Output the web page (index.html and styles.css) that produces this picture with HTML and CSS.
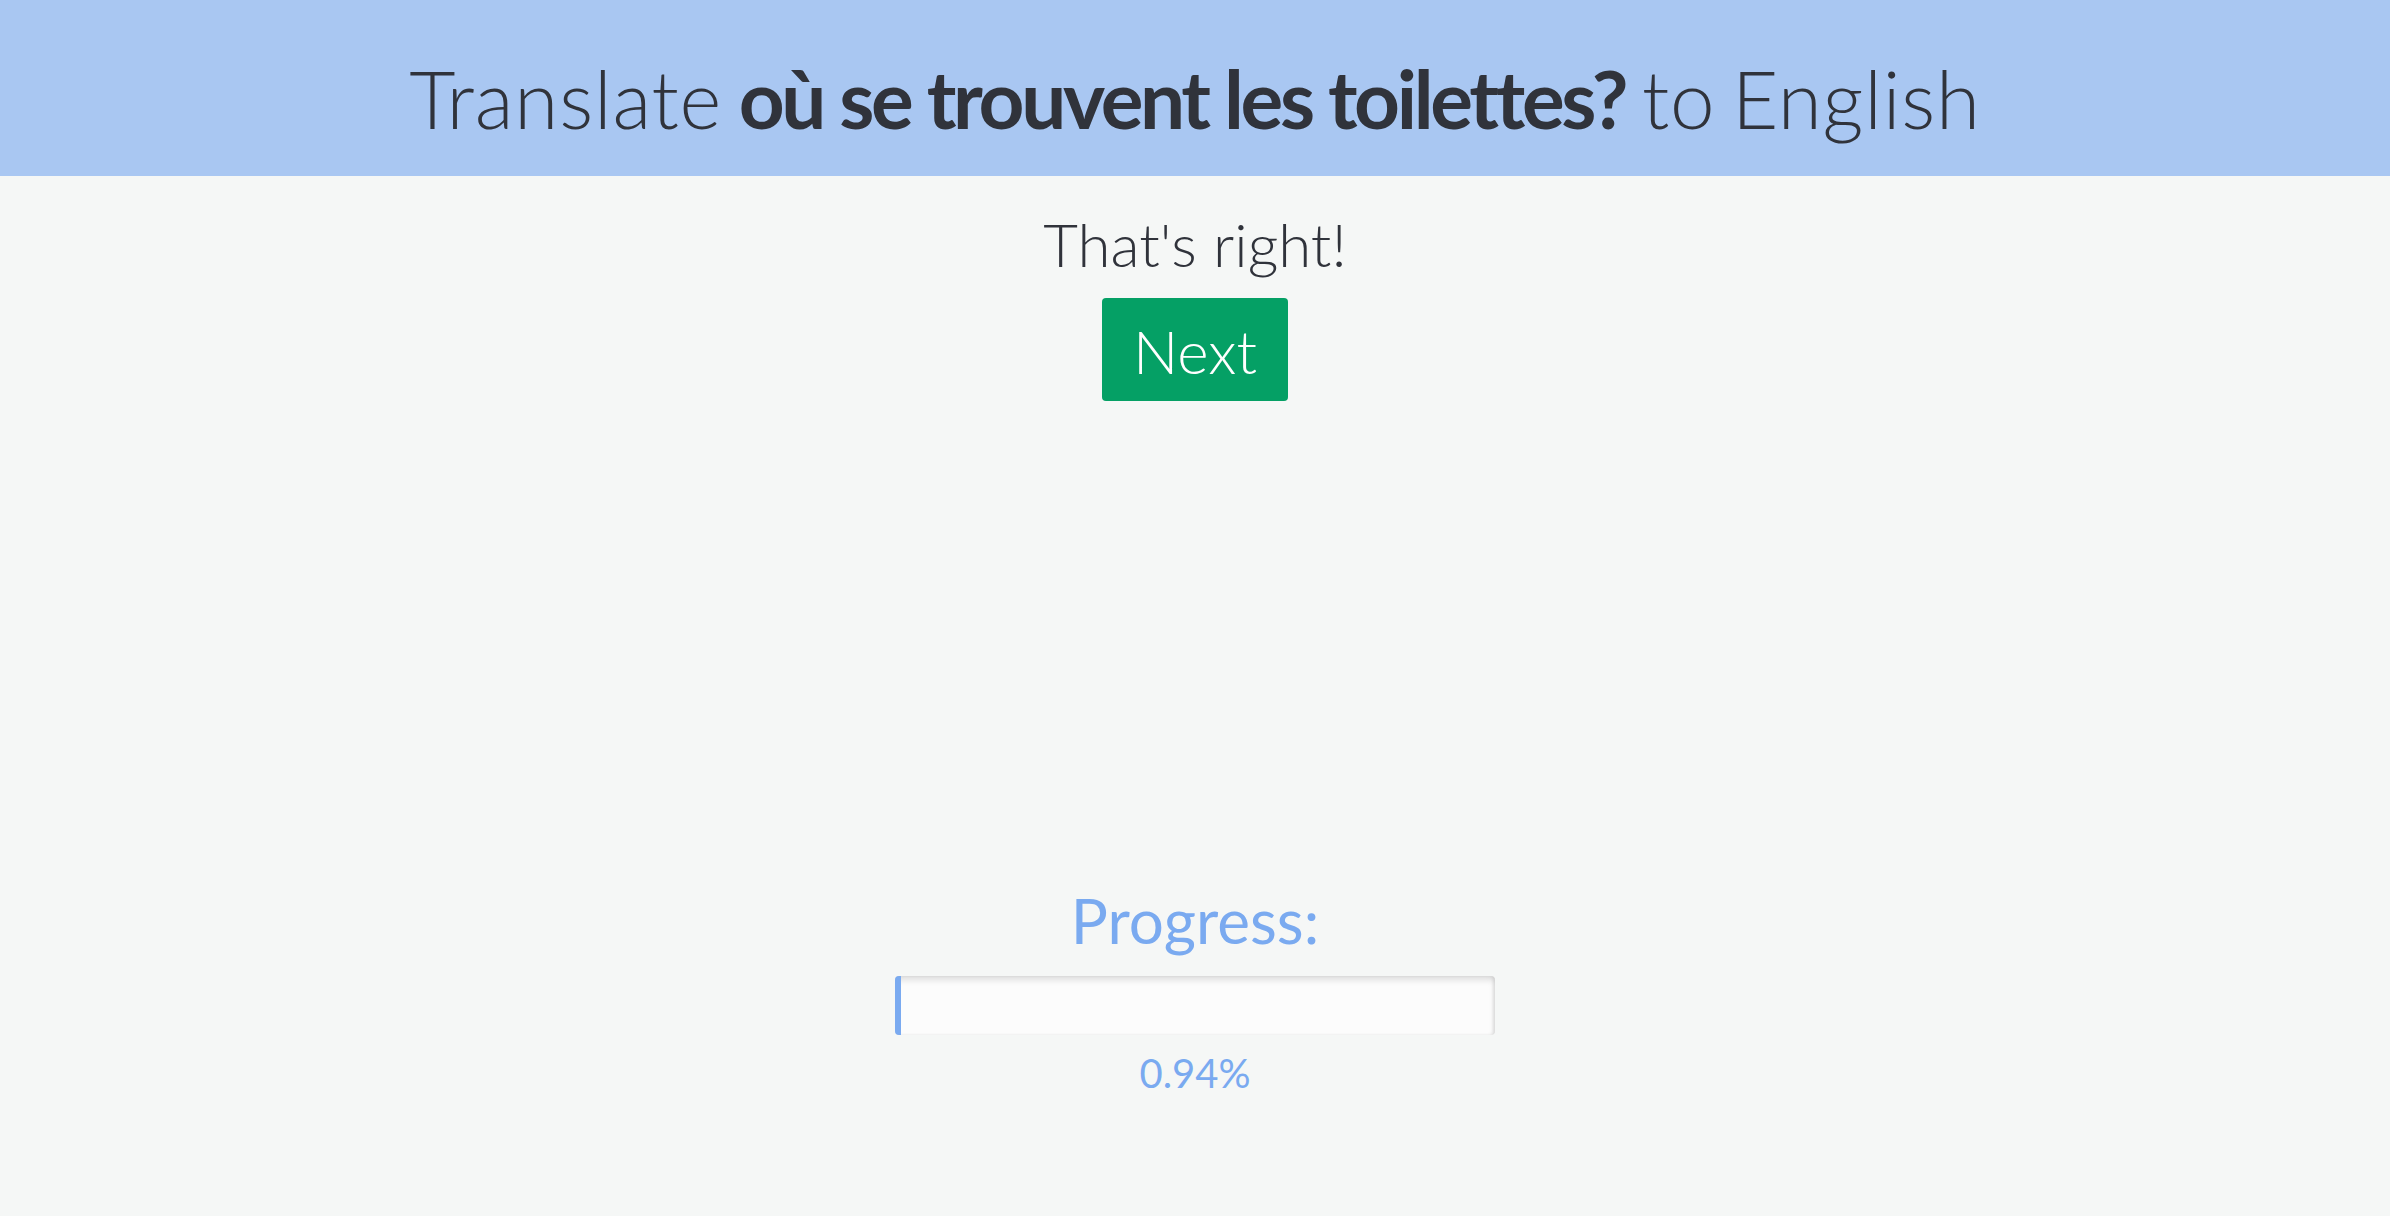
FILE: index.html
```html
<!DOCTYPE html>
<html lang="en">
<head>
<meta charset="utf-8">
<title>Translate</title>
<link rel="stylesheet" href="styles.css">
</head>
<body>
<header class="banner">
  <h1 class="prompt">Translate <strong>où se trouvent les toilettes?</strong> to English</h1>
</header>
<main class="content">
  <p class="feedback">That's right!</p>
  <button class="next-btn" type="button">Next</button>
</main>
<section class="progress-area">
  <h2 class="progress-label">Progress:</h2>
  <div class="progress-track">
    <div class="progress-fill" style="width: 0.94%"></div>
  </div>
  <div class="progress-value">0.94%</div>
</section>
</body>
</html>
```

FILE: styles.css
```css
html, body {
  margin: 0;
  padding: 0;
}
body {
  background: #f5f7f6;
  font-family: Lato, "Open Sans", sans-serif;
  font-variant-ligatures: none;
  color: #30333b;
  height: 1216px;
  overflow: hidden;
}
.banner {
  background: #a9c7f2;
  height: 176px;
  box-sizing: border-box;
  padding-top: 48px;
  text-align: center;
}
.prompt {
  margin: 0;
  font-size: 80px;
  line-height: 100px;
  font-weight: 300;
  letter-spacing: 0.8px;
  word-spacing: -6px;
  color: #30333b;
  white-space: nowrap;
}
.prompt strong {
  font-weight: 700;
  letter-spacing: -3.3px;
  word-spacing: 0;
}
.content {
  display: flex;
  flex-direction: column;
  align-items: center;
  padding-top: 32px;
}
.feedback {
  margin: 0;
  font-size: 60px;
  line-height: 72px;
  font-weight: 300;
  color: #30333b;
}
.next-btn {
  margin-top: 18px;
  width: 186px;
  height: 103px;
  padding: 4px 0 0;
  border: none;
  border-radius: 4px;
  background: #05a065;
  color: #ffffff;
  font-family: Lato, "Open Sans", sans-serif;
  font-variant-ligatures: none;
  font-size: 60px;
  font-weight: 300;
  line-height: 99px;
}
.progress-area {
  display: flex;
  flex-direction: column;
  align-items: center;
  padding-top: 484px;
}
.progress-label {
  margin: 0;
  font-size: 62px;
  line-height: 70px;
  font-weight: 400;
  color: #7aaaf0;
}
.progress-track {
  margin-top: 21px;
  width: 600px;
  height: 59px;
  background: #fcfcfc;
  border-radius: 4px;
  overflow: hidden;
  box-shadow: inset 0 4px 6px rgba(0, 0, 0, 0.12), inset -2px 0 3px rgba(0, 0, 0, 0.08);
  display: flex;
}
.progress-fill {
  background: #7aaaf0;
  height: 100%;
  min-width: 6px;
}
.progress-value {
  margin-top: 15px;
  font-size: 40px;
  line-height: 46px;
  color: #7aaaf0;
}
```
